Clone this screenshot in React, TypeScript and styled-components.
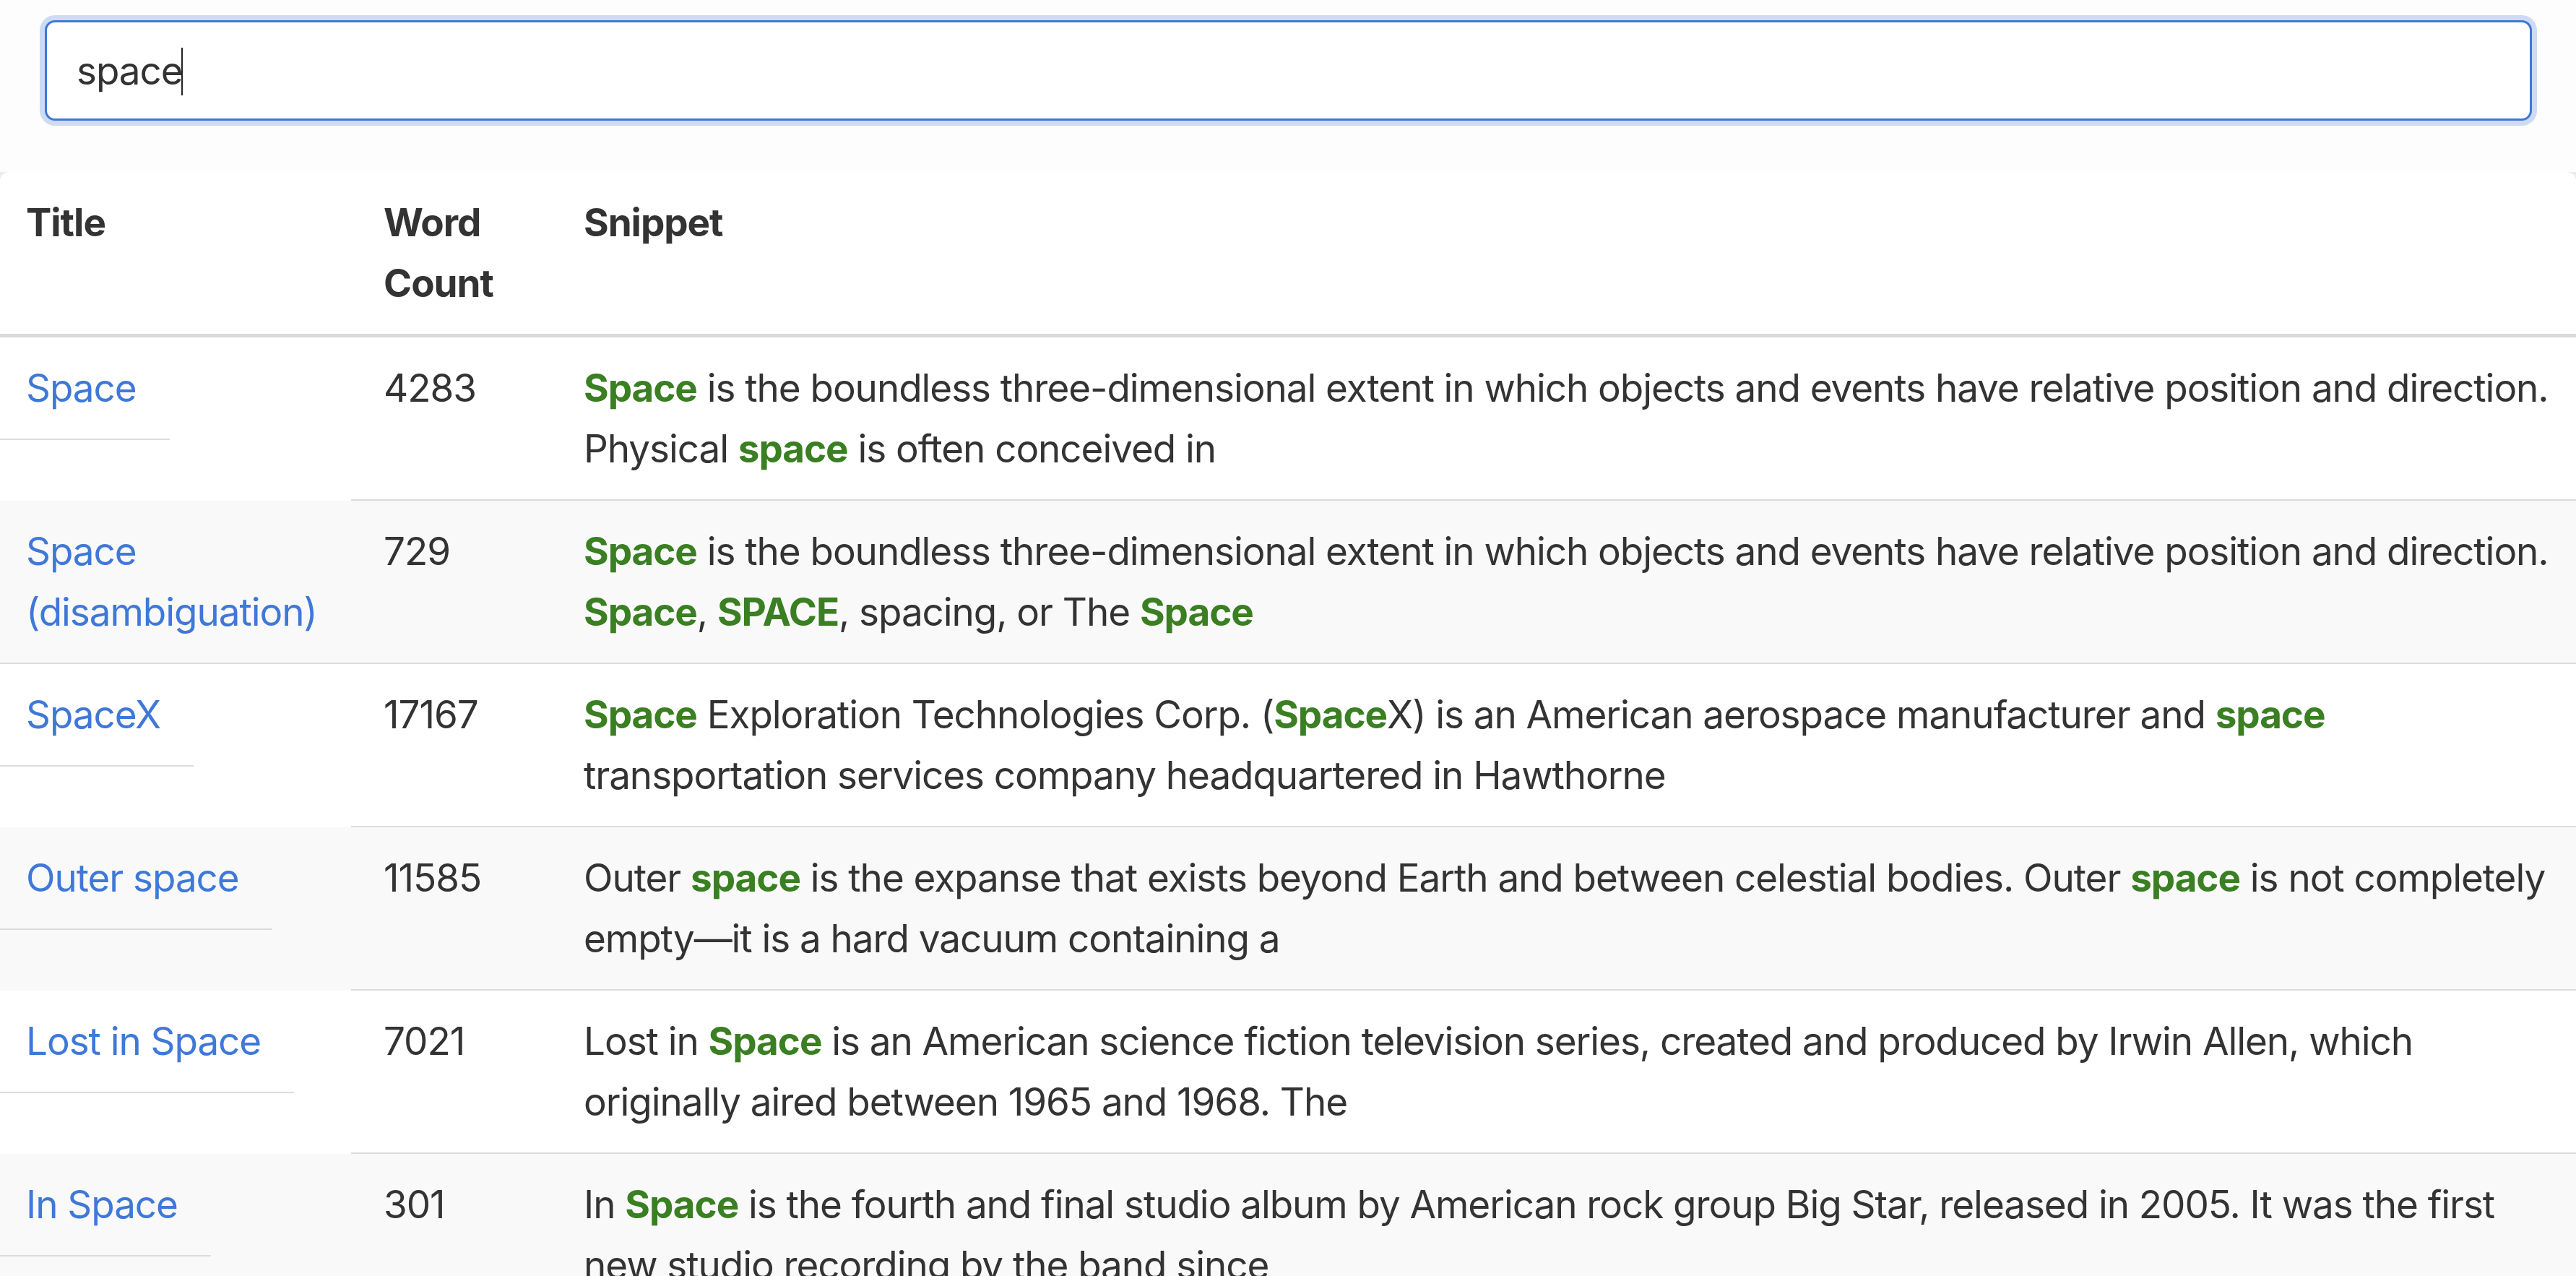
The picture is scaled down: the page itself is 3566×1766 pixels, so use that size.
import React from "react";
import styled, { createGlobalStyle } from "styled-components";

const GlobalStyle = createGlobalStyle`
  html, body {
    margin: 0;
    padding: 0;
    background: #ececec;
  }
  body {
    font-family: Inter, "Noto Sans", "Liberation Sans", sans-serif;
    font-size: 53px;
    line-height: 84px;
    letter-spacing: -0.02em;
    color: #333333;
  }
  #root {
    min-height: 100vh;
  }
`;

const Page = styled.div`
  min-height: 100vh;
  display: flex;
  flex-direction: column;
`;

const SearchBar = styled.header`
  background: #fdfdfd;
  padding: 28px 61px 71px 62px;
`;

const SearchField = styled.div`
  position: relative;
`;

const SearchInput = styled.input`
  display: block;
  width: 100%;
  height: 139px;
  box-sizing: border-box;
  padding: 0 42px 0 41px;
  font-family: inherit;
  font-size: 53px;
  letter-spacing: -0.02em;
  line-height: 84px;
  color: #333333;
  background: #ffffff;
  border: 3px solid #3e78d6;
  border-radius: 14px;
  box-shadow: 0 0 0 7px rgba(62, 120, 214, 0.25);
  outline: none;
  caret-color: transparent;
`;

const Caret = styled.span`
  position: absolute;
  left: 189px;
  top: 38px;
  width: 2px;
  height: 66px;
  background: #222222;
  pointer-events: none;
`;

const ResultsPanel = styled.main`
  flex: 1;
  background: #ffffff;
  border-radius: 12px 12px 0 0;
`;

const Table = styled.table`
  width: 100%;
  table-layout: fixed;
  border-collapse: separate;
  border-spacing: 0;
`;

const Col = styled.col<{ $width?: number }>`
  width: ${(p) => (p.$width ? `${p.$width}px` : "auto")};
`;

const HeadCell = styled.th<{ $first?: boolean }>`
  text-align: left;
  vertical-align: top;
  font-weight: 700;
  padding: 28px 45px 28px ${(p) => (p.$first ? "36px" : "45px")};
  border-bottom: 5px solid #dadada;
`;

const Row = styled.tr<{ $striped?: boolean }>`
  background: ${(p) => (p.$striped ? "#f9f9f9" : "#ffffff")};
`;

const TitleCell = styled.td`
  padding: 0;
  vertical-align: top;
`;

const TitleBox = styled.div`
  width: fit-content;
  max-width: 100%;
  box-sizing: border-box;
  padding: 28px 46px 28px 36px;
  border-bottom: 2px solid #dcdcdc;
`;

const TitleLink = styled.a`
  color: #3f78d8;
  text-decoration: none;
`;

const Cell = styled.td`
  vertical-align: top;
  padding: 28px 45px;
  border-bottom: 2px solid #dcdcdc;
`;

const SnippetLine = styled.span`
  display: block;
  white-space: nowrap;
`;

const Mark = styled.strong`
  font-weight: 700;
  color: #3a7f22;
`;

type Seg = string | { hl: string };

type Result = {
  title: string;
  count: number;
  lines: Seg[][];
};

const results: Result[] = [
  {
    title: "Space",
    count: 4283,
    lines: [
      [
        { hl: "Space" },
        " is the boundless three-dimensional extent in which objects and events have relative position and direction.",
      ],
      ["Physical ", { hl: "space" }, " is often conceived in"],
    ],
  },
  {
    title: "Space (disambiguation)",
    count: 729,
    lines: [
      [
        { hl: "Space" },
        " is the boundless three-dimensional extent in which objects and events have relative position and direction.",
      ],
      [{ hl: "Space" }, ", ", { hl: "SPACE" }, ", spacing, or The ", { hl: "Space" }],
    ],
  },
  {
    title: "SpaceX",
    count: 17167,
    lines: [
      [
        { hl: "Space" },
        " Exploration Technologies Corp. (",
        { hl: "Space" },
        "X) is an American aerospace manufacturer and ",
        { hl: "space" },
      ],
      ["transportation services company headquartered in Hawthorne"],
    ],
  },
  {
    title: "Outer space",
    count: 11585,
    lines: [
      [
        "Outer ",
        { hl: "space" },
        " is the expanse that exists beyond Earth and between celestial bodies. Outer ",
        { hl: "space" },
        " is not completely",
      ],
      ["empty\u2014it is a hard vacuum containing a"],
    ],
  },
  {
    title: "Lost in Space",
    count: 7021,
    lines: [
      [
        "Lost in ",
        { hl: "Space" },
        " is an American science fiction television series, created and produced by Irwin Allen, which",
      ],
      ["originally aired between 1965 and 1968. The"],
    ],
  },
  {
    title: "In Space",
    count: 301,
    lines: [
      [
        "In ",
        { hl: "Space" },
        " is the fourth and final studio album by American rock group Big Star, released in 2005. It was the first",
      ],
      ["new studio recording by the band since"],
    ],
  },
];

function renderSeg(seg: Seg, i: number) {
  if (typeof seg === "string") return <React.Fragment key={i}>{seg}</React.Fragment>;
  return <Mark key={i}>{seg.hl}</Mark>;
}

export default function App() {
  return (
    <>
      <GlobalStyle />
      <Page>
        <SearchBar>
          <SearchField>
            <SearchInput type="text" defaultValue="space" aria-label="Search" />
            <Caret />
          </SearchField>
        </SearchBar>
        <ResultsPanel>
          <Table>
            <colgroup>
              <Col $width={486} />
              <Col $width={277} />
              <Col />
            </colgroup>
            <thead>
              <tr>
                <HeadCell $first>Title</HeadCell>
                <HeadCell>Word Count</HeadCell>
                <HeadCell>Snippet</HeadCell>
              </tr>
            </thead>
            <tbody>
              {results.map((r, idx) => (
                <Row key={r.title} $striped={idx % 2 === 1}>
                  <TitleCell>
                    <TitleBox>
                      <TitleLink href="#">{r.title}</TitleLink>
                    </TitleBox>
                  </TitleCell>
                  <Cell>{r.count}</Cell>
                  <Cell>
                    {r.lines.map((line, li) => (
                      <SnippetLine key={li}>{line.map(renderSeg)}</SnippetLine>
                    ))}
                  </Cell>
                </Row>
              ))}
            </tbody>
          </Table>
        </ResultsPanel>
      </Page>
    </>
  );
}
